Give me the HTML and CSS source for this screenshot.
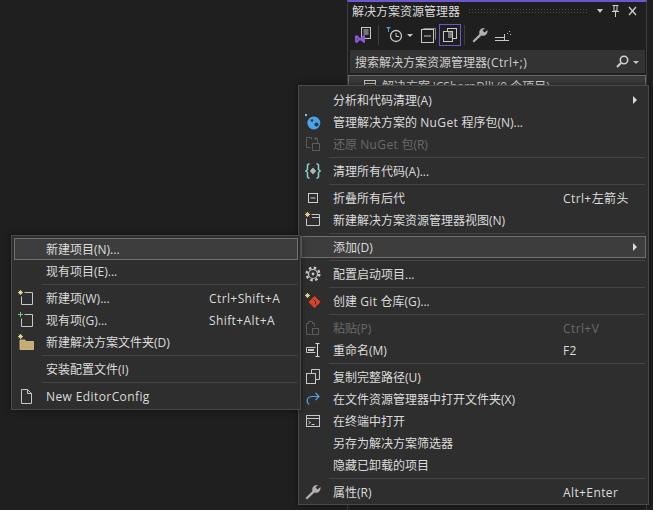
FILE: index.html
```html
<!DOCTYPE html>
<html>
  <head>
    <meta charset="UTF-8">
    <title>解决方案资源管理器</title>
    <link rel="stylesheet" href="styles.css">
  </head>
  <body>
    <div id="escritorio">
      <div id="panel">
        <div class="panel-titulo">
          <span>解决方案资源管理器</span>
          <span class="puntos"></span>
          <svg class="ctl" width="42" height="14" viewBox="0 0 42 14">
            <path d="M2 5h6l-3 4z" fill="#c8c8c8"/>
            <path d="M17.500 1.500h6M19 2v5h3V2M17 7.500h7M20.500 8v5" fill="none" stroke="#d0d0d0"/>
            <path d="M34 3l7 8M41 3l-7 8" fill="none" stroke="#d0d0d0" stroke-width="1.300"/>
          </svg>
        </div>
        <div class="panel-barra">
          <svg width="16" height="18" viewBox="0 0 16 18">
            <rect x="6.500" y="1.500" width="9" height="11" fill="#222" stroke="#c8c8c8"/>
            <path d="M8.500 4h5M8.500 6h5M8.500 8h5" stroke="#c8c8c8"/>
            <path d="M0 10l2-1 3 3 4-3 1 .5v7l-1 .5-4-3-3 3-2-1zM2 12v2l1-1z" fill="#8a5ad6"/>
          </svg>
          <i class="sep-v"></i>
          <svg width="27" height="18" viewBox="0 0 27 18">
            <path d="M0 1h5L3 3v3H2V3z" fill="#4a9fe0"/>
            <circle cx="10" cy="10" r="5.500" fill="none" stroke="#c8c8c8" stroke-width="1.300"/>
            <path d="M10 7v3.500h3" fill="none" stroke="#c8c8c8"/>
            <path d="M21 8h6l-3 3z" fill="#c8c8c8"/>
          </svg>
          <svg class="b-plegar" width="16" height="16" viewBox="0 0 16 16">
            <path d="M3.500 1.500h12v11" fill="none" stroke="#8a8a8a"/>
            <rect x="1.500" y="2.500" width="12" height="13" fill="#1f1f1f" stroke="#c8c8c8"/>
            <path d="M4 9h7" stroke="#c8c8c8"/>
          </svg>
          <span class="b-activo">
            <svg width="16" height="16" viewBox="0 0 16 16">
              <rect x="5.500" y="1.500" width="9" height="10" fill="none" stroke="#c8c8c8"/>
              <rect x="1.500" y="4.500" width="9" height="10" fill="#1f1f1f" stroke="#c8c8c8"/>
              <rect x="6" y="5" width="4" height="6" fill="#777"/>
            </svg>
          </span>
          <i class="sep-v"></i>
          <svg class="b-llave" width="16" height="16" viewBox="0 0 16 16">
            <path d="M2 15.500L.5 14l7-7c-1-3 1-6.500 5.500-6l-2.500 2.500 2 2L15.500 3c.5 4.500-3 6.500-6 5.500z" fill="#b0b0b0"/>
          </svg>
          <svg width="18" height="14" viewBox="0 0 18 14">
            <path d="M1 9.500h9M1 12.500h14M10.500 6v6" fill="none" stroke="#c8c8c8"/>
            <path d="M13 5h1v1h-1zM15 3h1v1h-1zM16 6h1v1h-1z" fill="#d8c070"/>
          </svg>
        </div>
        <div class="panel-buscar">
          <span>搜索解决方案资源管理器<span class="lat">(Ctrl+;)</span></span>
          <svg width="26" height="14" viewBox="0 0 26 14">
            <circle cx="8" cy="5" r="3.700" fill="none" stroke="#d0d0d0" stroke-width="1.600"/>
            <path d="M5 8l-4 4" stroke="#d0d0d0" stroke-width="2"/>
            <path d="M17 6h6l-3 3z" fill="#c8c8c8"/>
          </svg>
        </div>
        <div class="panel-arbol">
          <svg width="14" height="14" viewBox="0 0 14 14">
            <rect x="1.500" y="1.500" width="11" height="11" fill="none" stroke="#c8c8c8"/>
            <path d="M1 4.500h12" stroke="#c8c8c8"/>
          </svg>
          <span>解决方案 'CSharpDll' (0 个项目)</span>
        </div>
      </div>

      <div class="menu" id="menu-principal">
        <div class="item"><span class="ico"></span><span class="txt">分析和代码清理(A)</span><span class="flecha"></span></div>
        <div class="item">
          <span class="ico">
            <svg width="16" height="16" viewBox="0 0 16 16">
              <path d="M0 0h2v2H0z" fill="#7cc4ee"/>
              <circle cx="8.800" cy="9" r="6.500" fill="#4aa3e6"/>
              <circle cx="7" cy="6.500" r="1.300" fill="#1d3b55"/>
              <circle cx="11.500" cy="10.500" r="2.100" fill="#1d3b55"/>
            </svg>
          </span>
          <span class="txt">管理解决方案的 <span class="lat">NuGet</span> 程序包(N)...</span>
        </div>
        <div class="item off">
          <span class="ico">
            <svg width="16" height="16" viewBox="0 0 16 16">
              <path d="M5.500 11.500h-4v-10h5v2M11 1L9.500 2.500 11 4" fill="none" stroke="#5c5c5c"/>
              <rect x="7.500" y="7.500" width="7" height="7" fill="none" stroke="#5c5c5c"/>
              <path d="M9.500 2.500h3v5" fill="none" stroke="#5c5c5c"/>
            </svg>
          </span>
          <span class="txt">还原 <span class="lat">NuGet</span> 包(R)</span>
        </div>
        <div class="raya"></div>
        <div class="item">
          <span class="ico">
            <svg width="16" height="16" viewBox="0 0 16 16">
              <path d="M4.500 1h-1l-1 1v4.500L.8 8l1.700 1.500V14l1 1h1M11.500 1h1l1 1v4.500L15.200 8l-1.700 1.500V14l-1 1h-1" fill="none" stroke="#7fd6cf" stroke-width="1.500"/>
              <path d="M8 4.500l3.200 3.500L8 11.500 4.800 8z" fill="#b5b5b5"/>
            </svg>
          </span>
          <span class="txt">清理所有代码(A)...</span>
        </div>
        <div class="raya"></div>
        <div class="item">
          <span class="ico">
            <svg width="16" height="16" viewBox="0 0 16 16">
              <rect x="3.500" y="3.500" width="9" height="9" fill="none" stroke="#d0d0d0"/>
              <path d="M5.500 8h5" stroke="#d0d0d0"/>
            </svg>
          </span>
          <span class="txt">折叠所有后代</span>
          <span class="atajo">Ctrl+左箭头</span>
        </div>
        <div class="item">
          <span class="ico">
            <svg width="16" height="16" viewBox="0 0 16 16">
              <path d="M6.500 2.500h8v11h-13v-7M7 5.500h7.500" fill="none" stroke="#c8c8c8"/>
              <path d="M2.500 0v5M0 2.500h5M.8.8l3.400 3.400M4.200.8L.8 4.200" stroke="#e0cf8a"/>
            </svg>
          </span>
          <span class="txt">新建解决方案资源管理器视图(N)</span>
        </div>
        <div class="raya"></div>
        <div class="item activo"><span class="ico"></span><span class="txt">添加(D)</span><span class="flecha"></span></div>
        <div class="raya"></div>
        <div class="item">
          <span class="ico">
            <svg width="16" height="16" viewBox="0 0 16 16">
              <circle cx="8" cy="8" r="4.500" fill="none" stroke="#c8c8c8" stroke-width="1.200"/>
              <circle cx="8" cy="8" r="6.300" fill="none" stroke="#c8c8c8" stroke-width="2.400" stroke-dasharray="2.500 2.450"/>
              <circle cx="8" cy="8" r="1.400" fill="#c8c8c8"/>
            </svg>
          </span>
          <span class="txt">配置启动项目...</span>
        </div>
        <div class="raya"></div>
        <div class="item">
          <span class="ico">
            <svg width="16" height="16" viewBox="0 0 16 16">
              <path d="M9.500 3l6 6-6 6-6-6z" fill="#e0402a"/>
              <path d="M8.500 6.500l2 2v3" fill="none" stroke="#2d2d2d"/>
              <path d="M2.500 0v5M0 2.500h5M.8.8l3.400 3.400M4.200.8L.8 4.200" stroke="#e0cf8a"/>
            </svg>
          </span>
          <span class="txt">创建 <span class="lat">Git</span> 仓库(G)...</span>
        </div>
        <div class="raya"></div>
        <div class="item off">
          <span class="ico">
            <svg width="16" height="16" viewBox="0 0 16 16">
              <path d="M6.500 14.500h-5v-11h2v-2h4v2h2v3" fill="none" stroke="#5c5c5c"/>
              <rect x="7.500" y="8.500" width="6" height="6" fill="none" stroke="#5c5c5c"/>
            </svg>
          </span>
          <span class="txt">粘贴(P)</span>
          <span class="atajo">Ctrl+V</span>
        </div>
        <div class="item">
          <span class="ico">
            <svg width="16" height="16" viewBox="0 0 16 16">
              <path d="M10.500 5.500h-9v5h9" fill="none" stroke="#c8c8c8"/>
              <path d="M3 8h6" stroke="#c8c8c8" stroke-width="2"/>
              <path d="M10.500 1.500h2v13h-2M14.500 1.500h-2M14.500 14.500h-2" fill="none" stroke="#e0e0e0"/>
            </svg>
          </span>
          <span class="txt">重命名(M)</span>
          <span class="atajo">F2</span>
        </div>
        <div class="raya"></div>
        <div class="item">
          <span class="ico">
            <svg width="16" height="16" viewBox="0 0 16 16">
              <path d="M6.500 4.500v-4h8v10h-4" fill="none" stroke="#c8c8c8"/>
              <rect x="1.500" y="4.500" width="9" height="10" fill="none" stroke="#c8c8c8"/>
            </svg>
          </span>
          <span class="txt">复制完整路径(U)</span>
        </div>
        <div class="item">
          <span class="ico">
            <svg width="16" height="16" viewBox="0 0 16 16">
              <path d="M4.200 13.500C1 11 1.500 5.500 7 5.500h7M10.500 2l3.500 3.500L10.500 9" fill="none" stroke="#4aa3e6" stroke-width="1.200"/>
            </svg>
          </span>
          <span class="txt">在文件资源管理器中打开文件夹(X)</span>
        </div>
        <div class="item">
          <span class="ico">
            <svg width="16" height="16" viewBox="0 0 16 16">
              <rect x="1.500" y="2.500" width="13" height="11" fill="none" stroke="#c8c8c8"/>
              <path d="M1 5.500h14M3.500 8l2 1.500-2 1.500M6.500 11.500h3" fill="none" stroke="#c8c8c8"/>
            </svg>
          </span>
          <span class="txt">在终端中打开</span>
        </div>
        <div class="item"><span class="ico"></span><span class="txt">另存为解决方案筛选器</span></div>
        <div class="item"><span class="ico"></span><span class="txt">隐藏已卸载的项目</span></div>
        <div class="raya"></div>
        <div class="item">
          <span class="ico">
            <svg width="16" height="16" viewBox="0 0 16 16">
              <path d="M2 15.500L.5 14l7-7c-1-3 1-6.500 5.500-6l-2.500 2.500 2 2L15.500 3c.5 4.500-3 6.500-6 5.500z" fill="#b0b0b0"/>
            </svg>
          </span>
          <span class="txt">属性(R)</span>
          <span class="atajo">Alt+Enter</span>
        </div>
      </div>

      <div class="menu" id="menu-agregar">
        <div class="item activo"><span class="ico"></span><span class="txt">新建项目(N)...</span></div>
        <div class="item"><span class="ico"></span><span class="txt">现有项目(E)...</span></div>
        <div class="raya"></div>
        <div class="item">
          <span class="ico">
            <svg width="16" height="16" viewBox="0 0 16 16">
              <path d="M6.500 2.500h8v12h-11v-8" fill="none" stroke="#c8c8c8"/>
              <path d="M2.500 0v5M0 2.500h5M.8.8l3.400 3.400M4.200.8L.8 4.200" stroke="#e0cf8a"/>
            </svg>
          </span>
          <span class="txt">新建项(W)...</span>
          <span class="atajo">Ctrl+Shift+A</span>
        </div>
        <div class="item">
          <span class="ico">
            <svg width="16" height="16" viewBox="0 0 16 16">
              <path d="M6.500 2.500h8v12h-11v-8" fill="none" stroke="#c8c8c8"/>
              <path d="M2.500 0v5M0 2.500h5" stroke="#6fd26f"/>
            </svg>
          </span>
          <span class="txt">现有项(G)...</span>
          <span class="atajo">Shift+Alt+A</span>
        </div>
        <div class="item">
          <span class="ico">
            <svg width="16" height="16" viewBox="0 0 16 16">
              <path d="M2 6h5l1 1.500h7.500V15.500H2z" fill="#c4ac74" stroke="#d8c690" stroke-width=".8"/>
              <path d="M2.500 0v5M0 2.500h5M.8.8l3.400 3.400M4.200.8L.8 4.200" stroke="#e0cf8a"/>
            </svg>
          </span>
          <span class="txt">新建解决方案文件夹(D)</span>
        </div>
        <div class="raya"></div>
        <div class="item"><span class="ico"></span><span class="txt">安装配置文件(I)</span></div>
        <div class="raya"></div>
        <div class="item">
          <span class="ico">
            <svg width="16" height="16" viewBox="0 0 16 16">
              <path d="M3.500 1.500h6l4 4v10h-10zM9.500 1.500v4h4" fill="none" stroke="#c8c8c8"/>
            </svg>
          </span>
          <span class="txt lat">New EditorConfig</span>
        </div>
      </div>
    </div>
  </body>
</html>
```
FILE: styles.css
```css
* {
  box-sizing: border-box;
}

html,
body {
  margin: 0;
  height: 100%;
}

body {
  background-color: #1f1f1f;
  color: #dcdcdc;
  font-family: "Open Sans", "Noto Sans CJK SC", sans-serif;
  font-size: 12px;
  overflow: hidden;
}

#escritorio {
  position: relative;
  width: 653px;
  height: 510px;
  display: flex;
  justify-content: flex-end;
  padding-right: 6px;
}

#panel {
  width: 300px;
  height: 100%;
  border-left: 1px solid #3d3d3d;
  border-right: 1px solid #3d3d3d;
  border-top: 2px solid #6e56cf;
  background-color: #1f1f1f;
}

.panel-titulo {
  height: 17px;
  display: flex;
  align-items: center;
  padding: 0 9px 0 4px;
  gap: 8px;
}

.puntos {
  flex: 1;
  height: 6px;
  background-image: radial-gradient(#4d4d4d 0.6px, transparent 0.8px);
  background-size: 3px 3px;
}

.panel-barra {
  height: 26px;
  margin-top: 3px;
  display: flex;
  align-items: center;
  padding: 0 7px;
  gap: 5px;
}

.sep-v {
  width: 1px;
  height: 20px;
  background-color: #3d3d3d;
  margin: 0 2px;
}

.b-activo {
  width: 22px;
  height: 22px;
  display: flex;
  align-items: center;
  justify-content: center;
  border: 1px solid #6e56cf;
  margin: 0 -4px 0 -2px;
}

.b-plegar {
  margin-left: 2px;
}

.b-llave {
  margin-right: 1px;
}

.panel-buscar {
  height: 23px;
  margin: 2px 1px 0 2px;
  padding: 0 3px 0 5px;
  display: flex;
  align-items: center;
  justify-content: space-between;
  background-color: #333;
  color: #d0d0d0;
}

.panel-arbol {
  height: 22px;
  margin-top: 2px;
  padding-left: 14px;
  display: flex;
  align-items: center;
  gap: 5px;
  background-color: #3a3a3a;
  border: 1px solid #6a6a6a;
}

.menu {
  position: absolute;
  background-color: #2e2e2e;
  border: 1px solid #4a4a4a;
  padding: 3px 2px;
  box-shadow: 0 0 6px rgba(0, 0, 0, 0.5);
}

#menu-principal {
  left: 298px;
  top: 85px;
  width: 351px;
  height: 420px;
}

#menu-agregar {
  left: 11px;
  top: 235px;
  width: 290px;
  height: 175px;
  padding-top: 2px;
}

.item {
  height: 22px;
  display: flex;
  align-items: center;
  border: 1px solid transparent;
}

.ico {
  width: 22px;
  flex: none;
  display: flex;
  justify-content: center;
}

.txt {
  flex: 1;
  padding-left: 9px;
  white-space: nowrap;
}

.lat {
  letter-spacing: 0.4px;
}

.atajo {
  width: 82px;
  flex: none;
  white-space: nowrap;
  letter-spacing: 0.4px;
}

#menu-agregar .atajo {
  width: 88px;
}

.off {
  color: #6a6a6a;
}

.activo {
  background-color: #3d3d3d;
  border-color: #6f6f6f;
}

.flecha {
  width: 0;
  height: 0;
  margin-right: 8px;
  border-left: 4px solid #dcdcdc;
  border-top: 4px solid transparent;
  border-bottom: 4px solid transparent;
}

.raya {
  height: 5px;
  padding: 2px 1px 2px 0;
  margin-left: 28px;
}

.raya::before {
  content: "";
  display: block;
  height: 1px;
  background-color: #444;
}
```
